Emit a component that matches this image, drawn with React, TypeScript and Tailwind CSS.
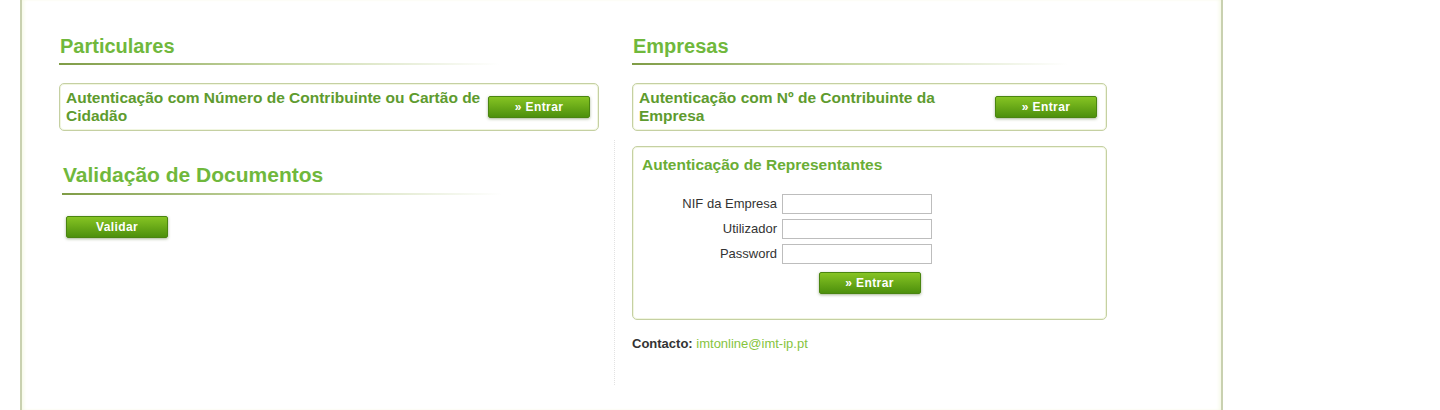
import React from 'react';

function GreenButton({ label, className = '' }: { label: string; className?: string }) {
  return (
    <button
      className={`w-[102px] h-[22px] rounded-[2px] border border-[#4a8510] bg-gradient-to-b from-[#86c423] to-[#4d900c] text-white text-[12px] tracking-[0.4px] font-bold shadow-[0_1px_3px_rgba(60,90,20,0.45)] ${className}`}
    >
      {label}
    </button>
  );
}

function SectionTitle({ title, size = 'text-[20px] leading-[24px]', width = 'w-[440px]' }: { title: string; size?: string; width?: string }) {
  return (
    <div>
      <h2 className={`${size} font-bold text-[#70b83c] pl-[1px]`}>{title}</h2>
      <div className={`${width} h-[2px] mt-[5px] bg-gradient-to-r from-[#7f9c45] via-[#c9d8a6] to-transparent`} />
    </div>
  );
}

function AuthBox({ text, width, pr }: { text: string; width: string; pr: string }) {
  return (
    <div
      className={`${width} h-[48px] flex items-center pl-[6px] ${pr} rounded-[5px] border border-[#c5d0a2] shadow-[inset_0_0_0_1px_#f1f6e0]`}
    >
      <p className="flex-1 text-[15.5px] leading-[18px] font-bold text-[#5e9b2e] pr-1">{text}</p>
      <GreenButton label="» Entrar" />
    </div>
  );
}

function Field({ label }: { label: string }) {
  return (
    <div className="flex items-center gap-[5px]">
      <label className="w-[144px] text-right text-[13px] text-[#333]">{label}</label>
      <input className="w-[150px] h-[20px] border border-[#bdbdbd] bg-white outline-none" />
    </div>
  );
}

export default function App() {
  return (
    <div className="w-[1440px] h-[410px] bg-white overflow-hidden font-['Liberation_Sans',Arial,sans-serif]">
      <div className="ml-[20px] w-[1203px] h-full flex border-x-2 border-[#c9d1b0] shadow-[inset_3px_0_4px_-2px_#f3f8df,inset_-3px_0_4px_-2px_#f3f8df]">
        {/* Particulares / Validação */}
        <div className="w-[592px] pl-[37px] pt-[34px]">
          <SectionTitle title="Particulares" />
          <div className="mt-[18px]">
            <AuthBox
              text="Autenticação com Número de Contribuinte ou Cartão de Cidadão"
              width="w-[540px]"
              pr="pr-[8px]"
            />
          </div>
          <div className="mt-[31px] ml-[3px]">
            <SectionTitle
              title="Validação de Documentos"
              size="text-[21px] leading-[26px]"
              width="w-[440px]"
            />
          </div>
          <GreenButton label="Validar" className="mt-[21px] ml-[7px]" />
        </div>

        {/* column divider */}
        <div className="w-px mt-[140px] h-[245px] border-l border-dotted border-[#e2e2e2]" />

        {/* Empresas */}
        <div className="pl-[17px] pt-[34px]">
          <SectionTitle title="Empresas" width="w-[436px]" />
          <div className="mt-[18px]">
            <AuthBox
              text="Autenticação com Nº de Contribuinte da Empresa"
              width="w-[475px]"
              pr="pr-[9px]"
            />
          </div>
          <div className="mt-[15px] w-[475px] h-[174px] rounded-[5px] border border-[#c5d0a2] shadow-[inset_0_0_0_1px_#f1f6e0] pt-[8px]">
            <h3 className="pl-[9px] text-[15.5px] leading-[20px] font-bold text-[#6aad35]">
              Autenticação de Representantes
            </h3>
            <div className="mt-[19px] flex flex-col gap-[5px]">
              <Field label="NIF da Empresa" />
              <Field label="Utilizador" />
              <Field label="Password" />
            </div>
            <div className="flex justify-center mt-[8px]">
              <GreenButton label="» Entrar" />
            </div>
          </div>
          <p className="mt-[16px] text-[13px] leading-[16px]">
            <span className="font-bold text-[#333]">Contacto:</span>{' '}
            <span className="text-[#86c43e]">imtonline@imt-ip.pt</span>
          </p>
        </div>
      </div>
    </div>
  );
}
